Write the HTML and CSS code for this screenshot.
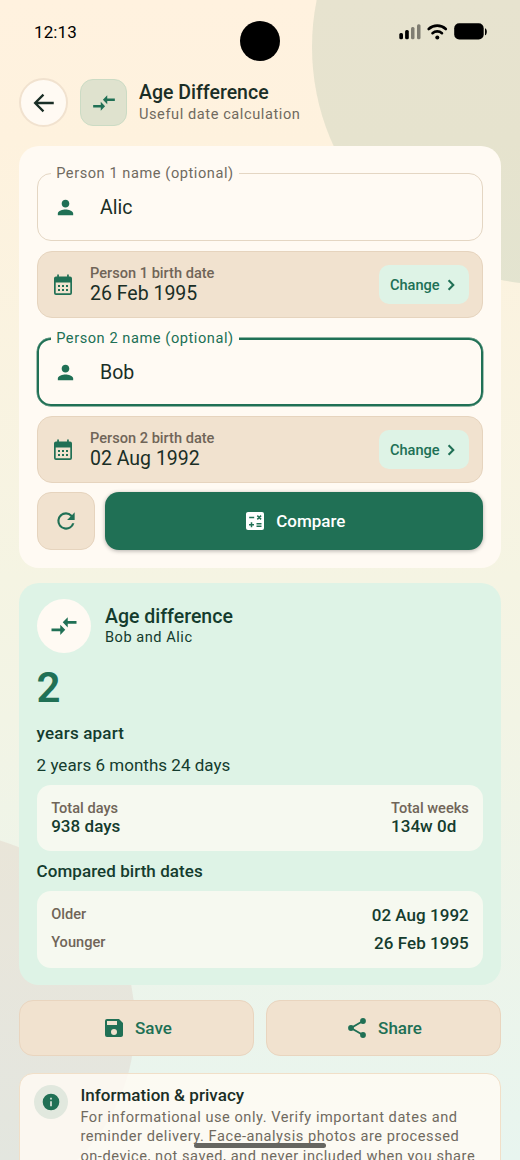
FILE: index.html
```html
<!DOCTYPE html>
<html lang="en">
<head>
<meta charset="utf-8">
<title>Age Difference</title>
<link rel="stylesheet" href="styles.css">
</head>
<body>
<svg width="0" height="0" class="defs">
  <symbol id="compare" viewBox="0 0 24 24"><path d="M9.010 13.900H2v2.200h7.010v3L13 15l-3.990-4.100zm5.980-.9v-2.900H22V7.900h-7.010V4.900L11 9l3.990 4.100z"/></symbol>
  <symbol id="person" viewBox="0 0 24 24"><path d="M12 12c2.210 0 4-1.790 4-4s-1.790-4-4-4-4 1.790-4 4 1.790 4 4 4zm0 2c-2.670 0-8 1.340-8 4v2h16v-2c0-2.660-5.330-4-8-4z"/></symbol>
  <symbol id="calendar" viewBox="0 0 24 24"><path fill-rule="evenodd" d="M5 3.500h1.200V1.500h1.700v2h8.200v-2h1.700v2H19a2 2 0 0 1 2 2V20a2 2 0 0 1-2 2H5a2 2 0 0 1-2-2V5.500c0-1.100.9-2 2-2zM4.700 9.500v10.800h14.600V9.500zM7 12h2v2H7zm4 0h2v2h-2zm4 0h2v2h-2zm-8 4h2v2H7zm4 0h2v2h-2zm4 0h2v2h-2z"/></symbol>
  <symbol id="chevron" viewBox="0 0 24 24"><path d="M10 5.500 8.200 7.200 13 12l-4.800 4.800 1.800 1.700 6.500-6.500z"/></symbol>
</svg>
<div class="screen">
  <div class="blob blob-top"></div>
  <div class="blob blob-bottom"></div>
  <div class="camera"></div>

  <div class="status">
    <span class="time">12:13</span>
    <svg class="status-icons" width="90" height="20" viewBox="0 0 90 20">
      <rect x="0.300" y="11" width="3.700" height="6.300" rx="1.500"/>
      <rect x="6.100" y="8" width="3.700" height="9.300" rx="1.500"/>
      <rect x="12" y="5" width="3.500" height="12.300" rx="1.500" opacity=".45"/>
      <rect x="18" y="2.200" width="3.500" height="15.100" rx="1.500" opacity=".45"/>
      <g fill="none" stroke="#000" stroke-width="2.600" stroke-linecap="round"><path d="M29.700 7c4.800-4.500 12.300-4.500 17.100 0"/><path d="M33.500 11.200c2.700-2.400 6.800-2.400 9.500 0"/></g>
      <circle cx="38.300" cy="15.400" r="2"/>
      <rect x="55.200" y="1.200" width="29.500" height="16.300" rx="5"/>
      <path d="M86 6.200c2.400.5 2.400 6.600 0 7.100z"/>
    </svg>
  </div>

  <header class="header">
    <div class="back"><svg width="26" height="26" viewBox="0 0 24 24"><path d="M11.500 4.300 3.800 12l7.700 7.700M4 12h17" fill="none" stroke="#1a2e26" stroke-width="2.100"/></svg></div>
    <div class="badge"><svg class="icon" width="26" height="26"><use href="#compare"/></svg></div>
    <div class="heading">
      <h1>Age Difference</h1>
      <p>Useful date calculation</p>
    </div>
  </header>

  <section class="form">
    <div class="field">
      <span class="legend">Person 1 name (optional)</span>
      <svg class="icon" width="23" height="23"><use href="#person"/></svg><span class="value">Alic</span>
    </div>
    <div class="date">
      <svg class="icon" width="24" height="24"><use href="#calendar"/></svg>
      <div class="date-text"><span class="small">Person 1 birth date</span><span class="value">26 Feb 1995</span></div>
      <div class="change"><span>Change</span><svg class="icon" width="20" height="20"><use href="#chevron"/></svg></div>
    </div>
    <div class="field focus">
      <span class="legend">Person 2 name (optional)</span>
      <svg class="icon" width="23" height="23"><use href="#person"/></svg><span class="value">Bob</span>
    </div>
    <div class="date">
      <svg class="icon" width="24" height="24"><use href="#calendar"/></svg>
      <div class="date-text"><span class="small">Person 2 birth date</span><span class="value">02 Aug 1992</span></div>
      <div class="change"><span>Change</span><svg class="icon" width="20" height="20"><use href="#chevron"/></svg></div>
    </div>
    <div class="actions">
      <div class="reset"><svg class="icon" width="26" height="26" viewBox="0 0 24 24"><path d="M17.650 6.350A7.958 7.958 0 0 0 12 4a8 8 0 1 0 7.730 10h-2.080A5.990 5.990 0 0 1 12 18c-3.310 0-6-2.690-6-6s2.690-6 6-6c1.660 0 3.140.69 4.220 1.780L13 11h7V4z"/></svg></div>
      <div class="compare"><svg width="24" height="24" viewBox="0 0 24 24"><path fill="#fff" d="M5 3h14a2 2 0 0 1 2 2v14a2 2 0 0 1-2 2H5a2 2 0 0 1-2-2V5c0-1.100.9-2 2-2z"/><path d="M6.200 8.500h5M14.300 6.600l3.800 3.800m0-3.800-3.800 3.800M6 15.800h5m-2.500-2.500v5M13.500 14.700h5m-5 2.500h5" fill="none" stroke="#207055" stroke-width="1.500"/></svg><span>Compare</span></div>
    </div>
  </section>

  <section class="result">
    <div class="result-head">
      <div class="disc"><svg class="icon" width="30" height="30"><use href="#compare"/></svg></div>
      <div><h2>Age difference</h2><p>Bob and Alic</p></div>
    </div>
    <div class="number">2</div>
    <div class="unit">years apart</div>
    <div class="detail">2 years 6 months 24 days</div>
    <div class="panel totals">
      <div><span class="small">Total days</span><b>938 days</b></div>
      <div><span class="small weeks">Total weeks</span><b>134w 0d</b></div>
    </div>
    <div class="subtitle">Compared birth dates</div>
    <div class="panel dates">
      <div><span class="small">Older</span><b>02 Aug 1992</b></div>
      <div><span class="small">Younger</span><b>26 Feb 1995</b></div>
    </div>
  </section>

  <div class="buttons">
    <div class="button"><svg class="icon" width="24" height="24" viewBox="0 0 24 24"><path d="M17 3H5a2 2 0 0 0-2 2v14a2 2 0 0 0 2 2h14c1.100 0 2-.9 2-2V7zm-5 16a3 3 0 1 1 0-6 3 3 0 0 1 0 6zm3-10H5V5h10z"/></svg><span>Save</span></div>
    <div class="button"><svg class="icon" width="24" height="24" viewBox="0 0 24 24"><path d="m18 5-12 7 12 7" fill="none" stroke="#207055" stroke-width="1.900"/><circle cx="18" cy="5" r="2.900"/><circle cx="6" cy="12" r="2.900"/><circle cx="18" cy="19" r="2.900"/></svg><span>Share</span></div>
  </div>

  <section class="info">
    <div class="info-icon"><svg width="20" height="20" viewBox="0 0 24 24"><circle cx="12" cy="12" r="10" fill="#207055"/><path d="M11 11h2v6h-2zM11 7h2v2h-2z" fill="#e1e8de"/></svg></div>
    <div class="info-text">
      <h3>Information &amp; privacy</h3>
      <p>For informational use only. Verify important dates and<br>reminder delivery. Face-analysis photos are processed<br>on-device, not saved, and never included when you share</p>
    </div>
  </section>
  <div class="home-bar"></div>
</div>
</body>
</html>
```

FILE: styles.css
```css
* { box-sizing: border-box; }
body { margin: 0; font-family: Roboto, sans-serif; color: #1a2e26; }
h1, h2, h3, p { margin: 0; }
svg { display: block; flex: none; }
span, b, h1, h2, h3 { white-space: nowrap; }
.defs { position: absolute; }
.icon { fill: #207055; overflow: visible; }

.screen {
  position: relative;
  width: 520px;
  height: 1160px;
  overflow: hidden;
  padding: 0 19.400px;
  background: linear-gradient(180deg, #fff2df 0%, #fef2de 12%, #f5f4e3 50%, #f2f4e5 62%, #e8f5ef 100%);
  isolation: isolate;
}
.blob { position: absolute; border-radius: 50%; z-index: -1; }
.blob-top { left: 312px; top: -191.500px; width: 476px; height: 476px; background: rgba(32, 112, 85, .11); }
.blob-bottom { left: -247.500px; top: 832px; width: 382px; height: 382px; background: rgba(190, 110, 100, .11); }
.camera { position: absolute; left: 240px; top: 21.300px; width: 40px; height: 40px; border-radius: 50%; background: #000; }
.home-bar { position: absolute; left: 194px; top: 1142.700px; width: 132px; height: 5px; border-radius: 3px; background: #666661; }

.status { height: 78px; display: flex; justify-content: space-between; padding: 22px 12px 0 14.600px; color: #000; }
.time { font-size: 17px; line-height: 20px; letter-spacing: .1px; }

.header { height: 68px; display: flex; align-items: flex-start; }
.back { width: 49px; height: 49px; border: 2px solid #f1e2cf; border-radius: 50%; background: #fffaf3; display: grid; place-items: center; }
.badge { width: 47px; height: 47px; margin: 1px 0 0 12px; border: 1px solid #cbdbc4; border-radius: 13px; background: #dfe2ce; display: grid; place-items: center; }
.heading { margin: 3px 0 0 11.600px; }
h1 { font-size: 19.500px; line-height: 23px; font-weight: 500; }
.heading p { font-size: 14.600px; line-height: 20px; letter-spacing: .57px; color: #706a5f; }

.form { height: 422px; padding: 27px 17.200px 0; border-radius: 20px; background: #fffaf3; }
.field { position: relative; height: 68px; border: 1px solid #e4d6c3; border-radius: 14px; display: flex; align-items: center; padding-left: 16.500px; }
.field .value { margin: 2px 0 0 23px; }
.legend { position: absolute; left: 13.600px; top: -10px; padding: 0 5px; background: #fffaf3; font-size: 14.600px; line-height: 18px; letter-spacing: .56px; color: #706a5f; }
.focus { margin-top: 20px; border: 2px solid #207055; box-shadow: 0 0 0 .4px #207055; padding-left: 15.500px; }
.focus .legend { left: 12.600px; top: -11.500px; color: #207055; }
.value { font-size: 19.500px; line-height: 22px; }
.date { height: 67px; margin-top: 10px; border: 1px solid #e6d4be; border-radius: 15px; background: #f1e2cf; display: flex; align-items: center; padding: 0 13.800px 0 13.600px; }
.date-text { display: flex; flex-direction: column; flex: 1; margin-left: 14.800px; }
.date .small { line-height: 18.500px; }
.small { font-size: 14.600px; line-height: 19px; font-weight: 500; color: #706558; }
.change { width: 90px; height: 39px; border-radius: 10px; background: #def3e6; color: #207055; font-size: 14.600px; font-weight: 500; display: flex; align-items: center; padding-left: 11.300px; gap: 1.500px; }
.actions { display: flex; gap: 9.800px; margin-top: 9.400px; }
.reset { width: 58.400px; height: 58px; border: 1px solid #e6d4be; border-radius: 14px; background: #f1e2cf; display: grid; place-items: center; }
.compare { flex: 1; height: 58px; border-radius: 14px; background: #207055; color: #fff; box-shadow: 0 1px 4px rgba(0, 0, 0, .3); display: flex; align-items: center; justify-content: center; gap: 9.500px; font-size: 17px; font-weight: 500; }

.result { height: 402px; margin-top: 15px; padding: 16.400px 17.200px 0; border-radius: 20px; background: #def3e6; color: #143c2e; }
.result-head { display: flex; gap: 14.400px; align-items: center; height: 54px; }
.disc { width: 54px; height: 54px; border-radius: 50%; background: #fffaf3; display: grid; place-items: center; }
h2 { font-size: 19.500px; line-height: 23px; font-weight: 500; }
.result-head p { font-size: 14.600px; line-height: 19px; letter-spacing: .52px; }
.number { margin-top: 8.600px; font-size: 42px; line-height: 51px; font-weight: 600; color: #207055; }
.unit { margin-top: 9px; font-size: 17px; line-height: 22px; font-weight: 500; letter-spacing: .2px; }
.detail { margin-top: 10px; font-size: 17px; line-height: 22px; letter-spacing: .02px; }
.panel { border-radius: 14px; background: #f6f9f0; }
.panel b { display: block; font-size: 17px; line-height: 19px; font-weight: 500; letter-spacing: .04px; }
.totals { height: 66px; margin-top: 9px; padding: 14px 14.600px; display: flex; justify-content: space-between; }
.totals .small { display: block; line-height: 18.500px; }
.subtitle { margin-top: 9px; font-size: 17px; line-height: 22px; font-weight: 500; letter-spacing: .06px; }
.dates { height: 77px; margin-top: 9px; padding: 13px 14.600px; display: flex; flex-direction: column; gap: 6px; }
.dates > div { display: flex; justify-content: space-between; height: 22.500px; }
.dates .small { line-height: 20px; }
.dates b { line-height: 23px; }

.buttons { display: flex; gap: 12px; margin-top: 15px; }
.button { flex: 1; height: 56px; border: 1px solid #e9d5bf; border-radius: 14px; background: #f1e2cf; color: #207055; display: flex; align-items: center; justify-content: center; gap: 9.500px; font-size: 17px; font-weight: 500; }

.info { height: 130px; margin-top: 17px; padding: 11px 14px; border: 1px solid #f1dfc8; border-radius: 14px; background: rgba(255, 250, 243, .84); display: flex; gap: 12px; }
.info-icon { width: 34px; height: 34px; border-radius: 50%; background: #e1e8de; display: grid; place-items: center; }
h3 { font-size: 17px; line-height: 20px; font-weight: 500; letter-spacing: .04px; }
.info-text p { font-size: 14.600px; line-height: 19.500px; letter-spacing: .54px; color: #706a5f; white-space: nowrap; margin-top: 2.500px; }
```
